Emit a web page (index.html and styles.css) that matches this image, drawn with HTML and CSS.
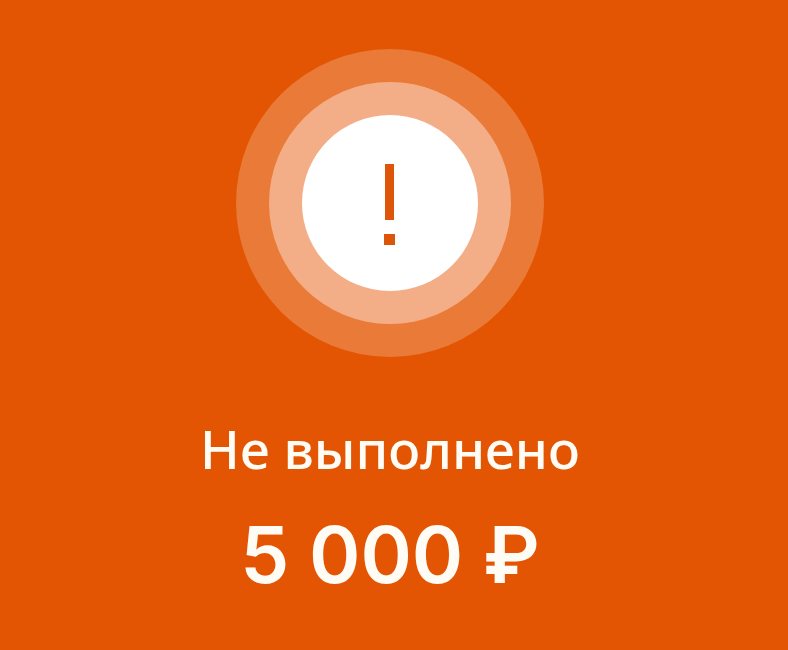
FILE: index.html
```html
<!DOCTYPE html>
<html lang="ru">
<head>
    <meta charset="UTF-8">
    <meta name="viewport" content="width=device-width, initial-scale=1.0">
    <title>Не выполнено</title>
    <link rel="stylesheet" href="styles.css">
</head>
<body>
    <main class="result">
        <svg class="result-icon" viewBox="0 0 308 308" aria-hidden="true">
            <circle cx="154" cy="154" r="154" fill="#ea7a37"/>
            <circle cx="154" cy="154" r="121" fill="#f3ae87"/>
            <circle cx="154" cy="154" r="88" fill="#fff"/>
            <path d="M149 115h9v56h-9zM148 185h11v11h-11z" fill="#dc5509"/>
        </svg>
        <h1 class="result-status">Не выполнено</h1>
        <p class="result-amount">5 000 ₽</p>
    </main>
</body>
</html>
```

FILE: styles.css
```css
body {
    margin: 0;
    background-color: #e35502;
    color: #fffcf5;
    font-family: "Noto Sans", "Open Sans", sans-serif;
}

.result {
    display: flex;
    flex-direction: column;
    align-items: center;
    padding: 49px 8px 24px 0;
    text-align: center;
}

.result-icon {
    width: 308px;
    height: 308px;
}

.result-status {
    margin: 60px 0 0;
    font-size: 53px;
    line-height: 64px;
    font-weight: 500;
}

.result-amount {
    margin: 30px 0 0;
    font-family: Inter, "Noto Sans", sans-serif;
    font-size: 78px;
    line-height: 88px;
    font-weight: 600;
}
```
